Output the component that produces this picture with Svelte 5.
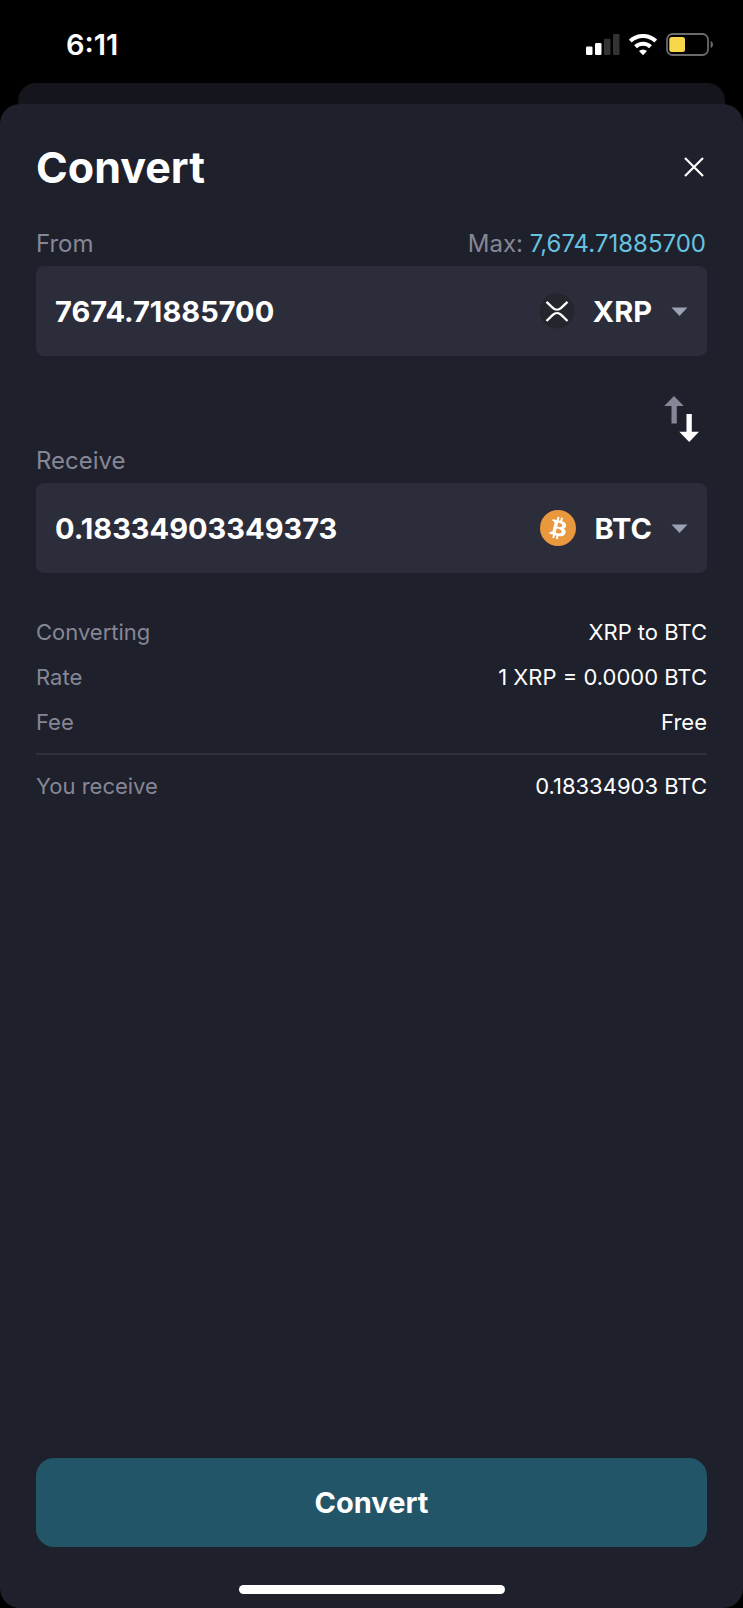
<script>
  let amount = $state('7674.71885700');
  let received = $state('0.18334903349373');
  let fromCoin = $state('XRP');
  let toCoin = $state('BTC');

  const coins = ['XRP', 'BTC'];
  const details = [
    ['Converting', 'XRP to BTC'],
    ['Rate', '1 XRP = 0.0000 BTC'],
    ['Fee', 'Free']
  ];

  function swap() {
    [fromCoin, toCoin] = [toCoin, fromCoin];
    [amount, received] = [received, amount];
  }
</script>

{#snippet coinIcon(coin)}
  {#if coin === 'XRP'}
    <svg class="coin-icon" viewBox="0 0 36 36" aria-hidden="true">
      <circle cx="19" cy="18" r="17.5" fill="#23262c" />
      <g fill="none" stroke="#fff" stroke-width="2.3">
        <path d="M8.500 8.8l6.3 6.1c2.4 2.3 6 2.3 8.4 0l6.3-6.1" />
        <path d="M8.500 28l6.3-6.1c2.4-2.3 6-2.3 8.4 0l6.3 6.1" />
      </g>
    </svg>
  {:else}
    <svg class="coin-icon" viewBox="0 0 32 32" aria-hidden="true">
      <circle cx="16" cy="16" r="16" fill="#e9983d" />
      <path
        fill="#fff"
        d="M23.189 14.02c.314-2.096-1.283-3.223-3.465-3.975l.708-2.84-1.728-.43-.69 2.765c-.454-.114-.92-.22-1.385-.326l.695-2.783L15.596 6l-.708 2.839c-.376-.086-.746-.17-1.104-.26l.002-.009-2.384-.595-.46 1.846s1.283.294 1.256.312c.7.175.826.638.805 1.006l-.806 3.235c.048.012.11.03.18.057l-.183-.045-1.13 4.532c-.086.212-.303.531-.793.41.018.025-1.256-.313-1.256-.313l-.858 1.978 2.25.561c.418.105.828.215 1.231.318l-.715 2.872 1.727.43.708-2.84c.472.127.93.245 1.378.357l-.706 2.828 1.728.43.715-2.866c2.948.558 5.164.333 6.097-2.333.752-2.146-.037-3.385-1.588-4.192 1.13-.26 1.98-1.003 2.207-2.538zm-3.95 5.538c-.533 2.147-4.148.986-5.32.695l.95-3.805c1.172.293 4.929.872 4.37 3.11zm.535-5.569c-.487 1.953-3.495.96-4.47.717l.86-3.45c.975.243 4.118.696 3.61 2.733z"
      />
    </svg>
  {/if}
{/snippet}

{#snippet caret()}
  <svg class="caret" viewBox="0 0 17 9" aria-hidden="true">
    <path d="M.5.5h16l-8 8.5z" fill="#9ca2b5" />
  </svg>
{/snippet}

<div class="screen">
  <header class="status">
    <span class="time">6:11</span>
    <div class="indicators">
      <svg width="34" height="22" viewBox="0 0 34 22" aria-label="Signal" role="img">
        <rect x="0" y="12.5" width="6.5" height="8.5" rx="1.2" fill="#fff" />
        <rect x="9" y="9" width="6.5" height="12" rx="1.2" fill="#fff" />
        <rect x="18" y="4.8" width="6.5" height="16.2" rx="1.2" fill="#333" />
        <rect x="27" y="0" width="6.5" height="21" rx="1.2" fill="#333" />
      </svg>
      <svg width="28" height="22" viewBox="0 0 28 22" aria-label="Wi-Fi" role="img">
        <g fill="none" stroke="#fff" stroke-width="4">
          <path d="M1.3 7.1a18.2 18.2 0 0 1 25.4 0" />
          <path d="M6.5 12.8a10.8 10.8 0 0 1 15 0" />
        </g>
        <path d="M14 21.2l-4-4.1a5.8 5.8 0 0 1 8 0z" fill="#fff" />
      </svg>
      <svg width="48" height="24" viewBox="0 0 48 24" aria-label="Battery" role="img">
        <rect x="1" y="1" width="41" height="21" rx="5.5" fill="none" stroke="#6b6b6b" stroke-width="1.8" />
        <rect x="3.3" y="4" width="15.7" height="15" rx="2.5" fill="#f8d74a" />
        <path d="M44.6 8c3.2 1.3 3.2 5.7 0 7z" fill="#6b6b6b" />
      </svg>
    </div>
  </header>

  <div class="backdrop"></div>

  <main class="sheet">
    <div class="heading">
      <h1>Convert</h1>
      <button class="close" aria-label="Close">
        <svg width="20" height="20" viewBox="0 0 20 20" aria-hidden="true">
          <path d="M1 1l18 18M19 1L1 19" stroke="#fff" stroke-width="2.2" />
        </svg>
      </button>
    </div>

    <div class="labels">
      <label for="from">From</label>
      <span>Max: <button class="max">7,674.71885700</button></span>
    </div>
    <div class="field">
      <input id="from" type="text" inputmode="decimal" bind:value={amount} />
      <label class="coin">
        {@render coinIcon(fromCoin)}
        <select aria-label="From coin" bind:value={fromCoin}>
          {#each coins as coin}<option>{coin}</option>{/each}
        </select>
        {@render caret()}
      </label>
    </div>

    <div class="swap-row">
      <button class="swap" aria-label="Swap coins" onclick={swap}>
        <svg width="36" height="46" viewBox="0 0 36 46" aria-hidden="true">
          <path d="M10 0l9.8 10h-7v17.5H7.5V10H.2z" fill="#868796" />
          <path d="M25.2 46l-9.9-10.2h7.2V18h5.3v17.8H35z" fill="#fff" />
        </svg>
      </button>
    </div>

    <div class="labels">
      <label for="receive">Receive</label>
    </div>
    <div class="field">
      <input id="receive" type="text" inputmode="decimal" bind:value={received} />
      <label class="coin">
        {@render coinIcon(toCoin)}
        <select aria-label="Receive coin" bind:value={toCoin}>
          {#each coins as coin}<option>{coin}</option>{/each}
        </select>
        {@render caret()}
      </label>
    </div>

    <dl class="details">
      {#each details as [name, value]}
        <div class="row"><dt>{name}</dt><dd>{value}</dd></div>
      {/each}
      <div class="row total"><dt>You receive</dt><dd>0.18334903 BTC</dd></div>
    </dl>

    <button class="submit">Convert</button>
    <div class="home"></div>
  </main>
</div>

<style>
  :global(body) {
    margin: 0;
    background: #000;
  }
  .screen {
    display: flex;
    flex-direction: column;
    min-height: 100vh;
    font-family: Inter, sans-serif;
    color: #fff;
  }
  .screen * {
    box-sizing: border-box;
  }
  svg {
    display: block;
    flex: none;
  }
  button,
  input,
  select {
    margin: 0;
    padding: 0;
    border: 0;
    background: none;
    color: inherit;
    font: inherit;
  }
  button,
  select {
    cursor: pointer;
  }
  .status {
    display: flex;
    justify-content: space-between;
    align-items: center;
    height: 83px;
    padding: 6px 29px 0 66px;
  }
  .time {
    font-size: 29px;
    font-weight: 600;
  }
  .indicators {
    display: flex;
    align-items: center;
    gap: 9px;
  }
  .backdrop {
    height: 42px;
    margin: 0 18px -21px;
    border-radius: 18px 18px 0 0;
    background: #15151d;
  }
  .sheet {
    display: flex;
    flex-direction: column;
    flex: 1;
    padding: 36px 36px 14px;
    border-radius: 20px;
    background: #1e202b;
  }
  .heading {
    display: flex;
    justify-content: space-between;
    align-items: center;
    height: 54px;
    margin-bottom: 34px;
  }
  h1 {
    margin: 0;
    font-size: 43px;
    line-height: 52px;
    font-weight: 700;
  }
  .close {
    padding: 3px;
  }
  .labels {
    display: flex;
    justify-content: space-between;
    height: 38px;
    padding-right: 1px;
    font-size: 24px;
    line-height: 32px;
    color: #868796;
  }
  .max {
    color: #67c2e0;
  }
  .field {
    display: flex;
    align-items: center;
    height: 90px;
    padding: 0 19px;
    border-radius: 8px;
    background: #2c2d3a;
    font-size: 29px;
    font-weight: 700;
  }
  .field input {
    flex: 1;
    min-width: 0;
    outline: none;
  }
  .coin {
    display: flex;
    align-items: center;
    gap: 19px;
  }
  .coin-icon {
    width: 36px;
    height: 36px;
    overflow: visible;
  }
  .coin select {
    appearance: none;
    field-sizing: content;
    outline: none;
  }
  .caret {
    width: 17px;
    height: 9px;
  }
  .swap-row {
    display: flex;
    justify-content: flex-end;
    padding: 40px 7px 3px;
  }
  .details {
    margin: 37px 0 0;
    font-size: 22px;
    line-height: 45px;
  }
  .row {
    display: flex;
    justify-content: space-between;
  }
  .total {
    margin-top: 8px;
    padding-top: 9px;
    border-top: 2px solid #2f303c;
  }
  dt {
    color: #868796;
  }
  dd {
    margin: 0;
  }
  .submit {
    height: 89px;
    margin-top: auto;
    border-radius: 18px;
    background: #225568;
    font-size: 29px;
    font-weight: 700;
  }
  .home {
    width: 266px;
    height: 9px;
    margin: 38px auto 0;
    border-radius: 5px;
    background: #fff;
  }
</style>
